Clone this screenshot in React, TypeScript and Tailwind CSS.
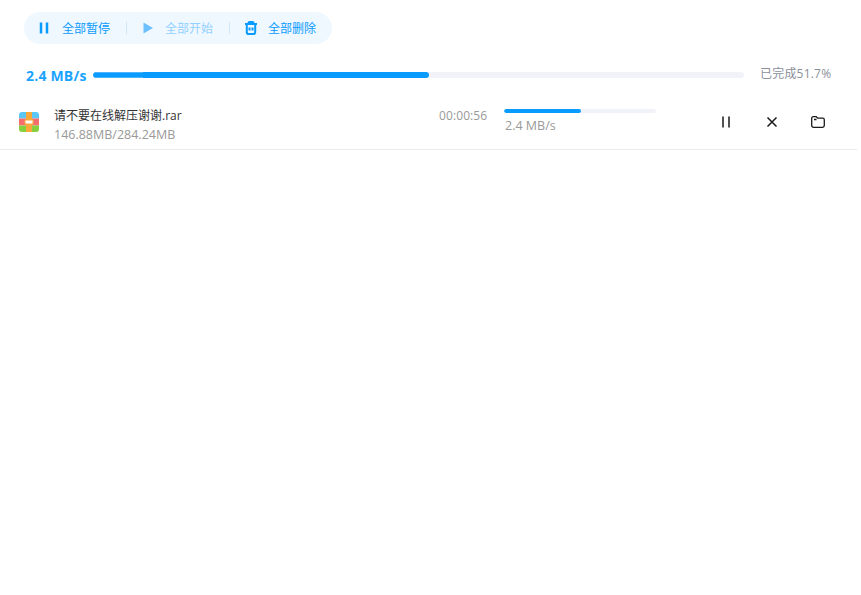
import React from "react";

const font = { fontFamily: '"Open Sans", "Noto Sans CJK SC", sans-serif' };

const PauseIcon = ({ className, width = 1.6 }: { className?: string; width?: number }) => (
  <svg viewBox="0 0 12 12" className={className} fill="none" stroke="currentColor" strokeWidth={width}>
    <path d="M3 .5v11M9 .5v11" />
  </svg>
);

const Toolbar: React.FC = () => {
  return (
    <div className="ml-6 flex h-8 w-[308px] items-center rounded-full bg-[#f0f8ff] pl-[14px] text-xs text-[#0a9bff]">
      <PauseIcon className="h-3 w-3 text-[#0a9bff]" width={2.5} />
      <span className="ml-3 w-12 whitespace-nowrap pt-0.5">全部暂停</span>
      <span className="ml-4 h-3 w-px bg-[#cfe6f8]" />
      <svg viewBox="0 0 12 12" className="ml-4 h-3 w-3 text-[#6cc0ff]" fill="currentColor">
        <path d="M.5 .5v11L10 6z" />
      </svg>
      <span className="ml-[10px] w-12 whitespace-nowrap pt-0.5 text-[#93d0ff]">全部开始</span>
      <span className="ml-4 h-3 w-px bg-[#cfe6f8]" />
      <svg viewBox="0 0 14 14" className="ml-[14px] h-[14px] w-[14px]" fill="none" stroke="currentColor" strokeWidth="2">
        <path d="M1 3h12M4.500 3V2a1 1 0 0 1 1-1h3a1 1 0 0 1 1 1v1M2.800 3.500v7.700a1.800 1.800 0 0 0 1.800 1.800h4.800a1.800 1.800 0 0 0 1.800-1.800V3.500M5.500 6.500v3M8.500 6.500v3" />
      </svg>
      <span className="ml-[10px] w-12 whitespace-nowrap pt-0.5">全部删除</span>
    </div>
  );
};

const TotalProgress: React.FC = () => {
  return (
    <div className="mt-[21px] flex h-5 items-center pl-[26px]">
      <span className="w-[67px] whitespace-nowrap text-[14px] font-bold tracking-[0.2px] text-[#1aa3ff]">2.4 MB/s</span>
      <div className="h-[6px] w-[651px] overflow-hidden rounded-full bg-[#f2f3f8]">
        <div className="h-full w-[336px] rounded-full bg-[#0a9bff]">
          <div className="h-full w-[50px] rounded-l-full border-y border-[#4db5ff]" />
        </div>
      </div>
      <span className="mb-0.5 ml-4 whitespace-nowrap text-xs tracking-[0.2px] text-[#8a8f99]">已完成51.7%</span>
    </div>
  );
};

const TaskRow: React.FC = () => {
  return (
    <div className="mt-[15px] flex h-[50px] items-start border-b border-[#ebebeb] pl-[19px]">
      <svg viewBox="0 0 20 20" className="mt-3 h-5 w-5 shrink-0">
        <defs>
          <clipPath id="box">
            <rect width="20" height="20" rx="3" />
          </clipPath>
        </defs>
        <g clipPath="url(#box)">
          <rect width="20" height="6.500" fill="#5cc6f5" />
          <rect y="6.500" width="20" height="7" fill="#f76d6d" />
          <rect y="13.500" width="20" height="6.500" fill="#84d03f" />
          <rect x="7" width="6" height="20" fill="#f9a93a" />
          <rect x="6" y="8" width="8" height="4" fill="#fff" stroke="#f9a93a" strokeWidth="1" />
        </g>
      </svg>
      <div className="ml-[15px] w-[385px] pt-[6px]">
        <div className="text-xs leading-5 text-[#333]">请不要在线解压谢谢.rar</div>
        <div className="text-[12.5px] leading-[18px] text-[#999]">146.88MB/284.24MB</div>
      </div>
      <div className="w-[65px] pt-2 text-xs leading-4 tracking-[0.1px] text-[#999]">00:00:56</div>
      <div className="w-[152px] pt-[9px]">
        <div className="h-1 overflow-hidden rounded-full bg-[#f2f3f8]">
          <div className="h-full w-[77px] rounded-full bg-[#0a9bff]" />
        </div>
        <div className="mt-[3px] pl-px text-[12.5px] leading-5 text-[#999]">2.4 MB/s</div>
      </div>
      <div className="ml-[64px] mt-4 flex items-center gap-[34px] text-[#1a1a1a]">
        <PauseIcon className="h-3 w-3" width={1.5} />
        <svg viewBox="0 0 12 12" className="h-3 w-3" fill="none" stroke="currentColor" strokeWidth="1.500">
          <path d="M1.500 1.500l9 9M10.500 1.500l-9 9" />
        </svg>
        <svg viewBox="0 0 14 12" className="-ml-px h-3 w-[14px]" fill="none" stroke="currentColor" strokeWidth="1.300">
          <path d="M.7 2.200A1.500 1.500 0 0 1 2.200.7h3l1.500 1.500h5a1.600 1.600 0 0 1 1.600 1.600v5.700a1.800 1.800 0 0 1-1.800 1.800H2.500a1.800 1.800 0 0 1-1.800-1.800zM3 3.500h2.500" />
        </svg>
      </div>
    </div>
  );
};

export default function App() {
  return (
    <div className="h-[595px] w-[857px] bg-white pt-3" style={font}>
      <Toolbar />
      <TotalProgress />
      <TaskRow />
    </div>
  );
}
